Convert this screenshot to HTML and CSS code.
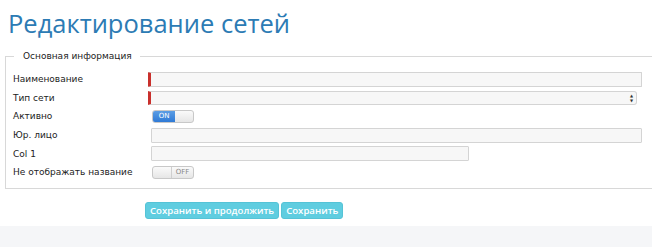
FILE: index.html
```html
<!DOCTYPE html>
<html>

<head>
    <title>Редактирование сетей</title>
    <link rel="stylesheet" href="styles.css">
</head>

<body>
    <div class="content">
        <h1>Редактирование сетей</h1>

        <fieldset class="group">
            <legend>Основная информация</legend>

            <div class="row">
                <label for="name">Наименование</label>
                <input type="text" id="name" class="field required">
            </div>

            <div class="row">
                <label for="type">Тип сети</label>
                <div class="select required">
                    <span class="arrows">&#9650;<br>&#9660;</span>
                </div>
            </div>

            <div class="row">
                <label>Активно</label>
                <div class="toggle on">
                    <span class="state">ON</span>
                    <span class="knob"></span>
                </div>
            </div>

            <div class="row">
                <label for="entity">Юр. лицо</label>
                <input type="text" id="entity" class="field">
            </div>

            <div class="row">
                <label for="col1">Col 1</label>
                <input type="text" id="col1" class="field short">
            </div>

            <div class="row">
                <label>Не отображать название</label>
                <div class="toggle off">
                    <span class="knob"></span>
                    <span class="state">OFF</span>
                </div>
            </div>
        </fieldset>

        <div class="actions">
            <button>Сохранить и продолжить</button>
            <button>Сохранить</button>
        </div>
    </div>

    <div class="footer"></div>
</body>

</html>
```

FILE: styles.css
```css
body {
    font-family: "DejaVu Sans", Verdana, sans-serif;
    font-size: 9px;
    color: #222;
    background-color: #fff;
    margin: 0;
    padding: 0;
    width: 652px;
    height: 247px;
    overflow: hidden;
}

.content {
    height: 226px;
}

h1 {
    font-family: "Open Sans", sans-serif;
    font-weight: normal;
    font-size: 25.5px;
    color: #2c7bb4;
    margin: 0;
    padding: 5px 0 0 8px;
    line-height: 37px;
    height: 51px;
    box-sizing: border-box;
}

.group {
    border: 1px solid #d8d8d8;
    border-right: none;
    margin: 0 0 0 5px;
    padding: 9px 0 6px 7px;
}

.group legend {
    padding: 0 8px 0 9px;
    margin-left: 1px;
    font-size: 9px;
}

.row {
    display: flex;
    align-items: center;
    height: 18.6px;
}

.row label {
    width: 135px;
    flex: none;
}

.field {
    box-sizing: border-box;
    height: 15px;
    width: 491px;
    margin: 0 0 0 3px;
    padding: 0;
    border: 1px solid #d4d4d4;
    border-radius: 1px;
    background-color: #f7f7f7;
}

.field.required {
    margin-left: 0;
    border-left: 3px solid #c9302c;
    width: 494px;
}

.field.short {
    width: 318px;
}

.select {
    box-sizing: border-box;
    position: relative;
    height: 14px;
    width: 489px;
    border: 1px solid #d4d4d4;
    border-radius: 3px;
    background-color: #f7f7f7;
}

.select.required {
    border-left: 3px solid #c9302c;
    border-radius: 0 3px 3px 0;
}

.select .arrows {
    position: absolute;
    right: 3px;
    top: 1px;
    font-size: 4px;
    line-height: 5px;
    color: #333;
}

.toggle {
    box-sizing: border-box;
    display: flex;
    width: 42px;
    height: 13px;
    margin-left: 4px;
    border: 1px solid #c8c8c8;
    border-radius: 3px;
    overflow: hidden;
    background: linear-gradient(#fafafa, #e6e6e6);
}

.toggle .state {
    flex: 1;
    font-size: 7px;
    line-height: 11px;
    text-align: center;
}

.toggle.on .state {
    background: linear-gradient(#5b9de4, #2f7ad6);
    color: #fff;
}

.toggle.off .state {
    color: #888;
    border-left: 1px solid #cfcfcf;
}

.toggle .knob {
    width: 18px;
    flex: none;
}

.actions {
    display: flex;
    gap: 2px;
    padding: 13px 0 0 145px;
}

.actions button {
    font-family: "Open Sans", sans-serif;
    font-size: 9.6px;
    font-weight: 600;
    color: #fff;
    background-color: #5fcde0;
    border: 1px solid #55c3d6;
    border-radius: 3px;
    height: 17px;
    padding: 0 4px;
    line-height: 15px;
    cursor: pointer;
}

.footer {
    height: 21px;
    background-color: #f5f6f8;
}
```
